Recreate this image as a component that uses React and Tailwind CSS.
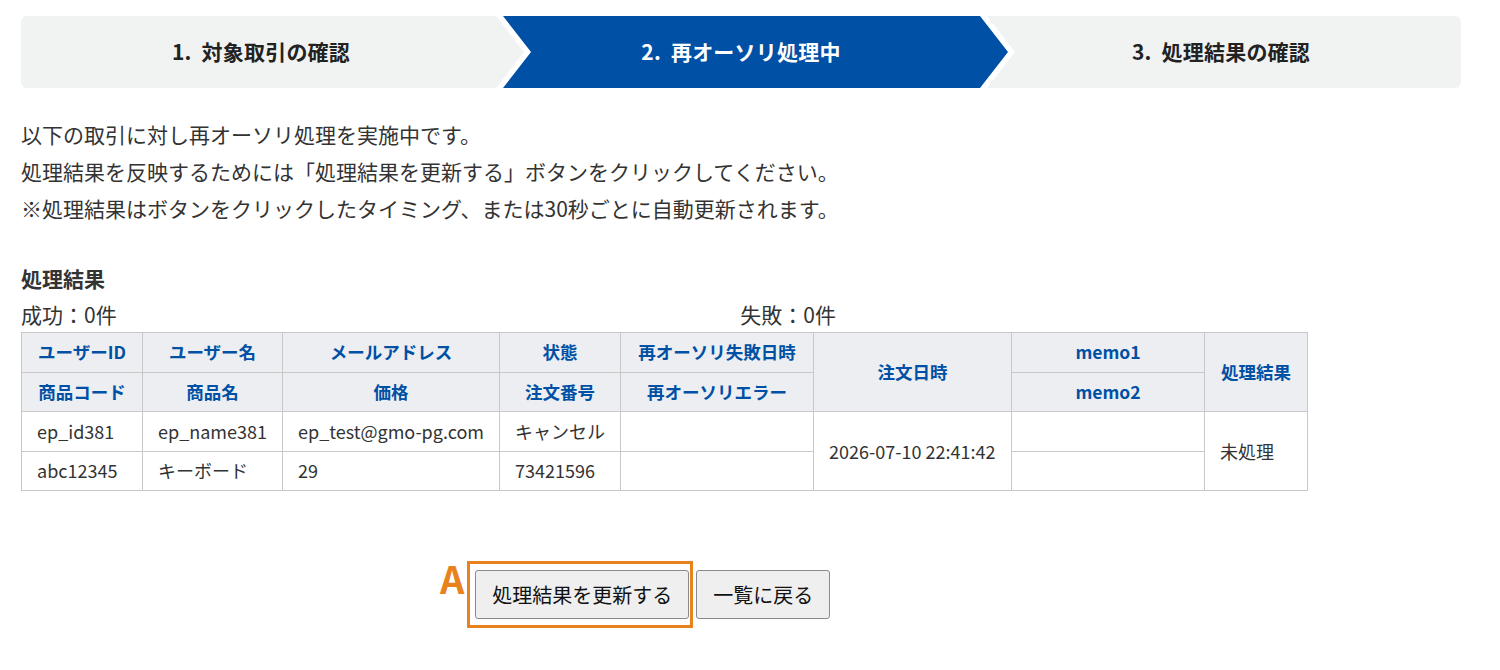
import React from "react";

const steps = [
  { no: 1, label: "対象取引の確認" },
  { no: 2, label: "再オーソリ処理中", active: true },
  { no: 3, label: "処理結果の確認" },
];

function StepBar() {
  return (
    <div className="flex h-[72px] rounded-[6px] bg-[#f1f2f2] overflow-hidden">
      {steps.map((s) => (
        <div
          key={s.no}
          className={`relative flex-1 flex items-center justify-center ${
            s.active ? "z-10 text-white" : "text-[#222]"
          }`}
        >
          {s.active && (
            <svg
              className="absolute left-0 top-0 overflow-visible"
              width="480"
              height="72"
              viewBox="0 0 480 72"
            >
              <polygon
                points="-5,0 486,0 514,36 486,72 -5,72 23,36"
                fill="#ffffff"
              />
              <polygon
                points="2,0 479,0 507,36 479,72 2,72 30,36"
                fill="#0050a5"
              />
            </svg>
          )}
          <span className="relative text-[21px] font-bold tracking-[0.01em] whitespace-pre">
            {s.no}.  {s.label}
          </span>
        </div>
      ))}
    </div>
  );
}

const th =
  "border border-[#c8c8c8] bg-[#eceef1] text-[#0050a5] font-bold text-[17.5px] h-[39.5px] px-3 text-center whitespace-nowrap";
const td =
  "border border-[#c8c8c8] text-[18px] h-[39.5px] px-[15px] text-left whitespace-nowrap";

function ResultTable() {
  return (
    <table className="border-collapse text-[#333]">
      <thead>
        <tr>
          <th className={`${th} w-[121px]`}>ユーザーID</th>
          <th className={`${th} w-[140px]`}>ユーザー名</th>
          <th className={`${th} w-[215px]`}>メールアドレス</th>
          <th className={`${th} w-[121px]`}>状態</th>
          <th className={`${th} w-[193px]`}>再オーソリ失敗日時</th>
          <th className={`${th} w-[198px]`} rowSpan={2}>
            注文日時
          </th>
          <th className={`${th} w-[193px]`}>memo1</th>
          <th className={`${th} w-[103px]`} rowSpan={2}>
            処理結果
          </th>
        </tr>
        <tr>
          <th className={th}>商品コード</th>
          <th className={th}>商品名</th>
          <th className={th}>価格</th>
          <th className={th}>注文番号</th>
          <th className={th}>再オーソリエラー</th>
          <th className={th}>memo2</th>
        </tr>
      </thead>
      <tbody>
        <tr>
          <td className={td}>ep_id381</td>
          <td className={td}>ep_name381</td>
          <td className={td}>ep_test@gmo-pg.com</td>
          <td className={td}>キャンセル</td>
          <td className={td}></td>
          <td className={`${td} text-center`} rowSpan={2}>
            2026-07-10 22:41:42
          </td>
          <td className={td}></td>
          <td className={td} rowSpan={2}>
            未処理
          </td>
        </tr>
        <tr>
          <td className={td}>abc12345</td>
          <td className={td}>キーボード</td>
          <td className={td}>29</td>
          <td className={td}>73421596</td>
          <td className={td}></td>
          <td className={td}></td>
        </tr>
      </tbody>
    </table>
  );
}

export default function App() {
  return (
    <div
      className="w-[1500px] h-[670px] bg-white px-[21px] pt-[16px] text-[#333]"
      style={{ fontFamily: '"Noto Sans CJK JP", "Noto Sans", sans-serif' }}
    >
      <div className="w-[1440px]">
        <StepBar />
      </div>

      <div className="mt-[28px] text-[21px] leading-[37px]">
        <p>以下の取引に対し再オーソリ処理を実施中です。</p>
        <p>処理結果を反映するためには「処理結果を更新する」ボタンをクリックしてください。</p>
        <p>※処理結果はボタンをクリックしたタイミング、または30秒ごとに自動更新されます。</p>
      </div>

      <h2 className="mt-[33px] text-[21px] font-bold leading-[36px]">処理結果</h2>
      <div className="flex w-[815px] justify-between text-[21px] leading-[36px]">
        <span>成功：0件</span>
        <span>失敗：0件</span>
      </div>

      <ResultTable />

      <div className="mt-[70px] flex items-center pl-[419px]">
        <span className="mr-[3px] -mt-[34px] text-[38px] font-bold leading-none text-[#e8821e]">
          A
        </span>
        <div className="border-[3px] border-[#e8821e] pl-[5px] pr-[1px] py-[6px]">
          <button className="h-[49px] px-[16px] rounded-[3px] border border-[#8a8a8a] bg-[#efefef] text-[20px] text-[#111]">
            処理結果を更新する
          </button>
        </div>
        <button className="ml-[3px] h-[49px] px-[16px] rounded-[3px] border border-[#8a8a8a] bg-[#efefef] text-[20px] text-[#111]">
          一覧に戻る
        </button>
      </div>
    </div>
  );
}
